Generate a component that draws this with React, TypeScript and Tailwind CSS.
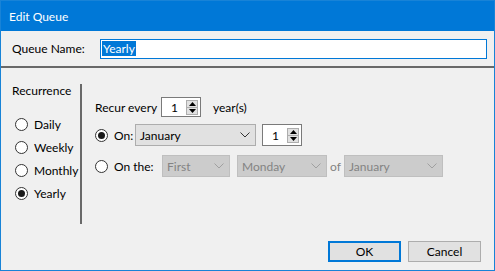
import { ReactNode } from 'react'

const font = { fontFamily: 'Lato, "Liberation Sans", sans-serif' }

function Radio({ checked, label }: { checked?: boolean; label: string }) {
  return (
    <div className="flex items-center gap-[6px] h-[13px]">
      <span className="w-[13px] h-[13px] rounded-full border border-[#333] bg-white flex items-center justify-center shrink-0">
        {checked && <span className="w-[7px] h-[7px] rounded-full bg-[#1a1a1a]" />}
      </span>
      <span className="whitespace-nowrap">{label}</span>
    </div>
  )
}

function Spinner({ value, tall }: { value: string; tall?: boolean }) {
  return (
    <div className={`w-[40px] ${tall ? 'h-[22px]' : 'h-[20px]'} bg-white border border-[#7a7a7a] flex items-center justify-between pl-[9px] pr-[2px]`}>
      <span>{value}</span>
      <div className="flex flex-col w-[12px] h-[15px] border border-[#adadad] bg-[#e1e1e1]">
        <div className="flex-1 flex items-center justify-center border-b border-[#adadad]">
          <svg width="7" height="4" viewBox="0 0 7 4"><path d="M0 4 L3.5 0 L7 4Z" fill="#000" /></svg>
        </div>
        <div className="flex-1 flex items-center justify-center">
          <svg width="7" height="4" viewBox="0 0 7 4"><path d="M0 0 L3.5 4 L7 0Z" fill="#000" /></svg>
        </div>
      </div>
    </div>
  )
}

function Chevron({ color }: { color: string }) {
  return (
    <svg width="10" height="6" viewBox="0 0 10 6">
      <path d="M0.5 0.5 L5 5 L9.5 0.5" fill="none" stroke={color} strokeWidth="1" />
    </svg>
  )
}

function Select({ width, children, disabled }: { width: string; children: ReactNode; disabled?: boolean }) {
  return (
    <div
      className={`${width} h-[22px] flex items-center justify-between pl-[4px] pr-[5px] border ${
        disabled ? 'bg-[#cccccc] border-[#bfbfbf] text-[#838383]' : 'bg-[#e1e1e1] border-[#adadad] text-black'
      }`}
    >
      <span>{children}</span>
      <Chevron color={disabled ? '#a0a0a0' : '#333'} />
    </div>
  )
}

export default function App() {
  return (
    <div style={font} className="w-[495px] h-[271px] border border-[#1883d7] bg-[#f0f0f0] text-[12px] leading-[15px] text-black flex flex-col overflow-hidden">
      {/* Title bar */}
      <div className="h-[30px] shrink-0 bg-[#0078d7] text-white flex items-center pl-[8px]">Edit Queue</div>

      {/* Queue name */}
      <div className="h-[35px] shrink-0 flex items-center pl-[11px]">
        <span className="w-[88px]">Queue Name:</span>
        <div className="w-[387px] h-[20px] bg-white border border-[#0078d7] flex items-center pl-[1px]">
          <span className="bg-[#0078d7] text-white leading-[15px] px-[1px]">Yearly</span>
        </div>
      </div>
      <div className="h-[2px] shrink-0 bg-[#696969]" />

      <div className="flex flex-1">
        {/* Recurrence type */}
        <div className="w-[79px] pl-[11px] pt-[15px]">
          <div className="mb-[20px]">Recurrence</div>
          <div className="flex flex-col gap-[10px] pl-[3px]">
            <Radio label="Daily" />
            <Radio label="Weekly" />
            <Radio label="Monthly" />
            <Radio checked label="Yearly" />
          </div>
        </div>
        <div className="flex flex-col">
          <div className="w-[2px] h-[16px]" />
          <div className="w-[2px] h-[140px] bg-[#696969]" />
        </div>

        {/* Pattern */}
        <div className="flex-1 pl-[13px] pt-[29px] flex flex-col">
          <div className="flex items-center">
            <span className="w-[66px]">Recur every</span>
            <Spinner value="1" />
            <span className="ml-[12px]">year(s)</span>
          </div>
          <div className="flex items-center mt-[7px]">
            <div className="w-[40px]"><Radio checked label="On:" /></div>
            <Select width="w-[121px]">January</Select>
            <div className="ml-[6px]"><Spinner value="1" tall /></div>
          </div>
          <div className="flex items-center mt-[9px]">
            <div className="w-[67px]"><Radio label="On the:" /></div>
            <Select width="w-[68px]" disabled>First</Select>
            <div className="ml-[7px]"><Select width="w-[90px]" disabled>Monday</Select></div>
            <span className="w-[17px] text-center text-[#838383]">of</span>
            <Select width="w-[99px]" disabled>January</Select>
          </div>

          <div className="flex-1" />
          <div className="flex justify-end gap-[7px] pr-[13px] pb-[8px]">
            <button className="w-[73px] h-[21px] bg-[#e1e1e1] border-2 border-[#0078d7]">OK</button>
            <button className="w-[73px] h-[21px] bg-[#e1e1e1] border border-[#adadad]">Cancel</button>
          </div>
        </div>
      </div>
    </div>
  )
}
